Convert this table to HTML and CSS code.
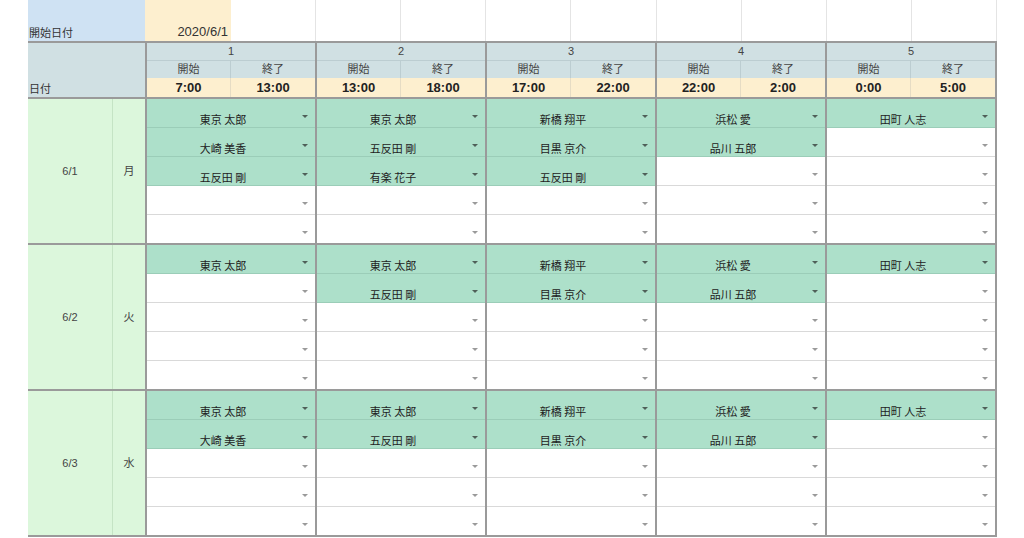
FILE: index.html
```html
<!DOCTYPE html>
<html lang="ja">
<head>
<meta charset="utf-8">
<title>シフト表</title>
<link rel="stylesheet" href="styles.css">
</head>
<body>
<div class="sheet">
  <div class="top">
    <div class="c-label">開始日付</div>
    <div class="c-start">2020/6/1</div>
    <div class="c-blank"></div><div class="c-blank"></div><div class="c-blank"></div>
    <div class="c-blank"></div><div class="c-blank"></div><div class="c-blank"></div>
    <div class="c-blank"></div><div class="c-blank"></div><div class="c-blank"></div>
  </div>

  <div class="hdr">
    <div class="hdr-left">日付</div>
    <div class="grp">
      <div class="grp-no">1</div>
      <div class="pair sub"><div>開始</div><div>終了</div></div>
      <div class="pair time"><div>7:00</div><div>13:00</div></div>
    </div>
    <div class="grp">
      <div class="grp-no">2</div>
      <div class="pair sub"><div>開始</div><div>終了</div></div>
      <div class="pair time"><div>13:00</div><div>18:00</div></div>
    </div>
    <div class="grp">
      <div class="grp-no">3</div>
      <div class="pair sub"><div>開始</div><div>終了</div></div>
      <div class="pair time"><div>17:00</div><div>22:00</div></div>
    </div>
    <div class="grp">
      <div class="grp-no">4</div>
      <div class="pair sub"><div>開始</div><div>終了</div></div>
      <div class="pair time"><div>22:00</div><div>2:00</div></div>
    </div>
    <div class="grp">
      <div class="grp-no">5</div>
      <div class="pair sub"><div>開始</div><div>終了</div></div>
      <div class="pair time"><div>0:00</div><div>5:00</div></div>
    </div>
  </div>

  <!-- 6/1 -->
  <div class="day">
    <div class="date">6/1</div>
    <div class="wd">月</div>
    <div class="slot">
      <div class="cell on"><span class="nm">東京 太郎</span><span class="dd"></span></div>
      <div class="cell on"><span class="nm">大崎 美香</span><span class="dd"></span></div>
      <div class="cell on"><span class="nm">五反田 剛</span><span class="dd"></span></div>
      <div class="cell"><span class="nm"></span><span class="dd"></span></div>
      <div class="cell"><span class="nm"></span><span class="dd"></span></div>
    </div>
    <div class="slot">
      <div class="cell on"><span class="nm">東京 太郎</span><span class="dd"></span></div>
      <div class="cell on"><span class="nm">五反田 剛</span><span class="dd"></span></div>
      <div class="cell on"><span class="nm">有楽 花子</span><span class="dd"></span></div>
      <div class="cell"><span class="nm"></span><span class="dd"></span></div>
      <div class="cell"><span class="nm"></span><span class="dd"></span></div>
    </div>
    <div class="slot">
      <div class="cell on"><span class="nm">新橋 翔平</span><span class="dd"></span></div>
      <div class="cell on"><span class="nm">目黒 京介</span><span class="dd"></span></div>
      <div class="cell on"><span class="nm">五反田 剛</span><span class="dd"></span></div>
      <div class="cell"><span class="nm"></span><span class="dd"></span></div>
      <div class="cell"><span class="nm"></span><span class="dd"></span></div>
    </div>
    <div class="slot">
      <div class="cell on"><span class="nm">浜松 愛</span><span class="dd"></span></div>
      <div class="cell on"><span class="nm">品川 五郎</span><span class="dd"></span></div>
      <div class="cell"><span class="nm"></span><span class="dd"></span></div>
      <div class="cell"><span class="nm"></span><span class="dd"></span></div>
      <div class="cell"><span class="nm"></span><span class="dd"></span></div>
    </div>
    <div class="slot">
      <div class="cell on"><span class="nm">田町 人志</span><span class="dd"></span></div>
      <div class="cell"><span class="nm"></span><span class="dd"></span></div>
      <div class="cell"><span class="nm"></span><span class="dd"></span></div>
      <div class="cell"><span class="nm"></span><span class="dd"></span></div>
      <div class="cell"><span class="nm"></span><span class="dd"></span></div>
    </div>
  </div>

  <!-- 6/2 -->
  <div class="day">
    <div class="date">6/2</div>
    <div class="wd">火</div>
    <div class="slot">
      <div class="cell on"><span class="nm">東京 太郎</span><span class="dd"></span></div>
      <div class="cell"><span class="nm"></span><span class="dd"></span></div>
      <div class="cell"><span class="nm"></span><span class="dd"></span></div>
      <div class="cell"><span class="nm"></span><span class="dd"></span></div>
      <div class="cell"><span class="nm"></span><span class="dd"></span></div>
    </div>
    <div class="slot">
      <div class="cell on"><span class="nm">東京 太郎</span><span class="dd"></span></div>
      <div class="cell on"><span class="nm">五反田 剛</span><span class="dd"></span></div>
      <div class="cell"><span class="nm"></span><span class="dd"></span></div>
      <div class="cell"><span class="nm"></span><span class="dd"></span></div>
      <div class="cell"><span class="nm"></span><span class="dd"></span></div>
    </div>
    <div class="slot">
      <div class="cell on"><span class="nm">新橋 翔平</span><span class="dd"></span></div>
      <div class="cell on"><span class="nm">目黒 京介</span><span class="dd"></span></div>
      <div class="cell"><span class="nm"></span><span class="dd"></span></div>
      <div class="cell"><span class="nm"></span><span class="dd"></span></div>
      <div class="cell"><span class="nm"></span><span class="dd"></span></div>
    </div>
    <div class="slot">
      <div class="cell on"><span class="nm">浜松 愛</span><span class="dd"></span></div>
      <div class="cell on"><span class="nm">品川 五郎</span><span class="dd"></span></div>
      <div class="cell"><span class="nm"></span><span class="dd"></span></div>
      <div class="cell"><span class="nm"></span><span class="dd"></span></div>
      <div class="cell"><span class="nm"></span><span class="dd"></span></div>
    </div>
    <div class="slot">
      <div class="cell on"><span class="nm">田町 人志</span><span class="dd"></span></div>
      <div class="cell"><span class="nm"></span><span class="dd"></span></div>
      <div class="cell"><span class="nm"></span><span class="dd"></span></div>
      <div class="cell"><span class="nm"></span><span class="dd"></span></div>
      <div class="cell"><span class="nm"></span><span class="dd"></span></div>
    </div>
  </div>

  <!-- 6/3 -->
  <div class="day">
    <div class="date">6/3</div>
    <div class="wd">水</div>
    <div class="slot">
      <div class="cell on"><span class="nm">東京 太郎</span><span class="dd"></span></div>
      <div class="cell on"><span class="nm">大崎 美香</span><span class="dd"></span></div>
      <div class="cell"><span class="nm"></span><span class="dd"></span></div>
      <div class="cell"><span class="nm"></span><span class="dd"></span></div>
      <div class="cell"><span class="nm"></span><span class="dd"></span></div>
    </div>
    <div class="slot">
      <div class="cell on"><span class="nm">東京 太郎</span><span class="dd"></span></div>
      <div class="cell on"><span class="nm">五反田 剛</span><span class="dd"></span></div>
      <div class="cell"><span class="nm"></span><span class="dd"></span></div>
      <div class="cell"><span class="nm"></span><span class="dd"></span></div>
      <div class="cell"><span class="nm"></span><span class="dd"></span></div>
    </div>
    <div class="slot">
      <div class="cell on"><span class="nm">新橋 翔平</span><span class="dd"></span></div>
      <div class="cell on"><span class="nm">目黒 京介</span><span class="dd"></span></div>
      <div class="cell"><span class="nm"></span><span class="dd"></span></div>
      <div class="cell"><span class="nm"></span><span class="dd"></span></div>
      <div class="cell"><span class="nm"></span><span class="dd"></span></div>
    </div>
    <div class="slot">
      <div class="cell on"><span class="nm">浜松 愛</span><span class="dd"></span></div>
      <div class="cell on"><span class="nm">品川 五郎</span><span class="dd"></span></div>
      <div class="cell"><span class="nm"></span><span class="dd"></span></div>
      <div class="cell"><span class="nm"></span><span class="dd"></span></div>
      <div class="cell"><span class="nm"></span><span class="dd"></span></div>
    </div>
    <div class="slot">
      <div class="cell on"><span class="nm">田町 人志</span><span class="dd"></span></div>
      <div class="cell"><span class="nm"></span><span class="dd"></span></div>
      <div class="cell"><span class="nm"></span><span class="dd"></span></div>
      <div class="cell"><span class="nm"></span><span class="dd"></span></div>
      <div class="cell"><span class="nm"></span><span class="dd"></span></div>
    </div>
  </div>
</div>
</body>
</html>
```

FILE: styles.css
```css
html, body {
  margin: 0;
  padding: 0;
  background: #ffffff;
}

body {
  font-family: "Liberation Sans", "Noto Sans CJK JP", sans-serif;
  color: #333333;
}

.sheet {
  margin-left: 28px;
  width: 969px;
}

/* top row */
.top {
  display: flex;
  height: 41px;
}

.c-label {
  width: 117px;
  box-sizing: border-box;
  background: #cfe2f3;
  font-size: 11px;
  line-height: 14px;
  display: flex;
  align-items: flex-end;
  padding: 0 0 1px 1px;
}

.c-start {
  width: 86px;
  box-sizing: border-box;
  background: #fdefcf;
  font-size: 13px;
  line-height: 15px;
  display: flex;
  align-items: flex-end;
  justify-content: flex-end;
  padding: 0 3px 2px 0;
}

.c-blank {
  flex: 1;
  border-right: 1px solid #e4e4e4;
}

/* header */
.hdr {
  display: flex;
  border-top: 2px solid #9a9a9a;
  border-bottom: 2px solid #9a9a9a;
}

.hdr-left {
  width: 117px;
  box-sizing: border-box;
  background: #d0e0e3;
  font-size: 11px;
  line-height: 14px;
  display: flex;
  align-items: flex-end;
  padding: 0 0 1px 1px;
}

.grp {
  width: 168px;
  border-left: 2px solid #9a9a9a;
  background: #d0e0e3;
}

.grp:last-child {
  border-right: 2px solid #9a9a9a;
}

.grp-no {
  height: 17px;
  line-height: 16px;
  border-bottom: 1px solid #bccdd1;
  font-size: 11px;
  text-align: center;
  color: #444444;
}

.pair {
  display: grid;
  grid-template-columns: 84px 84px;
}

.pair > div {
  text-align: center;
}

.sub {
  height: 17px;
  line-height: 17px;
  font-size: 11px;
  color: #444444;
}

.sub > div:first-child {
  border-right: 1px solid #bccdd1;
}

.time {
  height: 19px;
  line-height: 19px;
  font-size: 13px;
  font-weight: bold;
  background: #fdefcf;
  color: #222222;
}

.time > div:first-child {
  border-right: 1px solid #e6dcc4;
}

/* day blocks */
.day {
  display: flex;
  border-bottom: 2px solid #9a9a9a;
}

.date,
.wd {
  background: #dcf7dc;
  display: flex;
  align-items: center;
  justify-content: center;
  font-size: 11px;
  color: #444444;
}

.date {
  width: 84px;
}

.wd {
  width: 33px;
  box-sizing: border-box;
  border-left: 1px solid #c5e4c5;
  padding-bottom: 2px;
}

.slot {
  width: 168px;
  border-left: 2px solid #9a9a9a;
  display: flex;
  flex-direction: column;
}

.slot:last-child {
  border-right: 2px solid #9a9a9a;
}

.cell {
  height: 28px;
  display: flex;
  align-items: flex-end;
  background: #ffffff;
  border-bottom: 1px solid #d9d9d9;
}

.cell:last-child {
  border-bottom: none;
}

.cell.on {
  background: #ade0ca;
  border-bottom-color: #9bcdb8;
}

.nm {
  flex: 1;
  text-align: center;
  font-size: 11px;
  line-height: 14px;
  padding: 0 3px 1px 0;
  color: #222222;
  font-family: "Noto Sans CJK JP", sans-serif;
}

.dd {
  width: 0;
  height: 0;
  border-left: 3px solid transparent;
  border-right: 3px solid transparent;
  border-top: 3px solid #9a9a9a;
  margin: 0 7px 9px 0;
}

.on .dd {
  border-top-color: #4f5f58;
}
```
